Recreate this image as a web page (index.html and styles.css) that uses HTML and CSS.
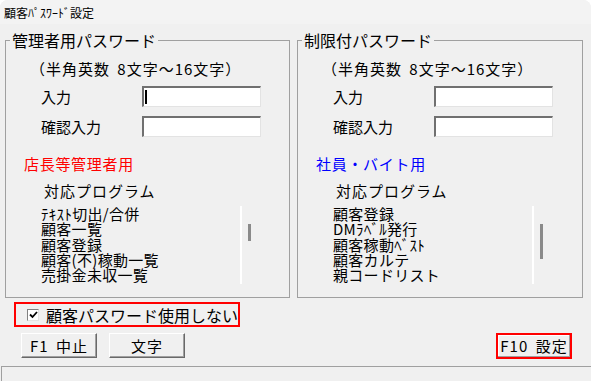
FILE: index.html
```html
<!DOCTYPE html>
<html lang="ja">

<head>
    <meta charset="UTF-8">
    <title>顧客パスワード設定</title>
    <link rel="stylesheet" href="styles.css">
</head>

<body>
    <div class="window">
        <div class="titlebar">顧客ﾊﾟｽﾜｰﾄﾞ設定</div>

        <div class="groups">
            <!-- 管理者用 -->
            <fieldset class="group">
                <legend>管理者用パスワード</legend>
                <p class="hint">（半角英数 8文字～16文字）</p>
                <div class="field">
                    <span class="label">入力</span>
                    <span class="input"><span class="caret"></span></span>
                </div>
                <div class="field">
                    <span class="label">確認入力</span>
                    <span class="input"></span>
                </div>
                <p class="role role-red">店長等管理者用</p>
                <p class="prog">対応プログラム</p>
                <div class="list">
                    <ul class="list-items">
                        <li>ﾃｷｽﾄ切出/合併</li>
                        <li>顧客一覧</li>
                        <li>顧客登録</li>
                        <li>顧客(不)稼動一覧</li>
                        <li>売掛金未収一覧</li>
                    </ul>
                    <div class="track"><span class="thumb thumb-short"></span></div>
                </div>
            </fieldset>

            <!-- 制限付 -->
            <fieldset class="group group-right">
                <legend>制限付パスワード</legend>
                <p class="hint">（半角英数 8文字～16文字）</p>
                <div class="field">
                    <span class="label">入力</span>
                    <span class="input"></span>
                </div>
                <div class="field">
                    <span class="label">確認入力</span>
                    <span class="input"></span>
                </div>
                <p class="role role-blue">社員・バイト用</p>
                <p class="prog">対応プログラム</p>
                <div class="list">
                    <ul class="list-items">
                        <li>顧客登録</li>
                        <li>DMﾗﾍﾞﾙ発行</li>
                        <li>顧客稼動ﾍﾞｽﾄ</li>
                        <li>顧客カルテ</li>
                        <li>親コードリスト</li>
                    </ul>
                    <div class="track"><span class="thumb thumb-long"></span></div>
                </div>
            </fieldset>
        </div>

        <label class="check-row">
            <span class="checkbox">
                <svg width="9" height="8" viewBox="0 0 9 8">
                    <path d="M1 3.5 L3.5 6 L8 1" fill="none" stroke="#000" stroke-width="1.8" />
                </svg>
            </span>
            顧客パスワード使用しない
        </label>

        <div class="buttons">
            <button class="btn">F1 中止</button>
            <button class="btn">文字</button>
            <button class="btn btn-marked">F10 設定</button>
        </div>

        <div class="statusbar"></div>
    </div>
</body>

</html>
```

FILE: styles.css
```css
* {
    margin: 0;
    padding: 0;
    box-sizing: border-box;
}

body {
    background: #fff;
    font-family: "Noto Sans CJK JP", sans-serif;
    color: #000;
}

.window {
    width: 591px;
    height: 381px;
    background: #f0f0f0;
    border-radius: 8px 8px 0 0;
    overflow: hidden;
}

.titlebar {
    height: 24px;
    padding: 5px 0 0 4px;
    font-size: 12px;
    line-height: 16px;
    background: #f3f3f3;
}

.groups {
    display: flex;
    gap: 7px;
    margin-top: 7px;
    padding-left: 5px;
}

.group {
    width: 285px;
    height: 267px;
    border: 1px solid #a0a0a0;
}

.group-right {
    width: 286px;
}

.group legend {
    margin-left: 4px;
    padding: 0 2px;
    font-size: 16px;
    line-height: 18px;
}

.hint {
    margin: 11px 0 0 24px;
    font-size: 15px;
    line-height: 18px;
    letter-spacing: 1px;
    word-spacing: 3px;
}

.field {
    display: flex;
    align-items: center;
    margin: 8px 0 0 35px;
    font-size: 15px;
    line-height: 18px;
}

.field + .field {
    margin-top: 9px;
}

.label {
    width: 101px;
}

.input {
    position: relative;
    width: 119px;
    height: 21px;
    background: #fff;
    border-style: solid;
    border-width: 2px 1px 1px 2px;
    border-color: #707070 #e3e3e3 #e3e3e3 #707070;
}

.caret {
    position: absolute;
    left: 1px;
    top: 2px;
    width: 2px;
    height: 14px;
    background: #000;
}

.role {
    margin: 18px 0 0 18px;
    font-size: 15px;
    line-height: 18px;
    letter-spacing: 0.7px;
}

.role-red {
    color: #f00;
}

.role-blue {
    color: #00f;
}

.prog {
    margin: 9px 0 0 38px;
    font-size: 15px;
    line-height: 18px;
    letter-spacing: 1px;
}

.list {
    display: flex;
    height: 78px;
    margin: 6px 0 0 35px;
}

.list-items {
    width: 199px;
    overflow: hidden;
    list-style: none;
    font-size: 15px;
    line-height: 15.25px;
    letter-spacing: 0.3px;
}

.track {
    width: 12px;
    padding-left: 6px;
    border-left: 2px solid #fff;
}

.thumb {
    display: block;
    width: 3px;
    margin-top: 18px;
    background: #8a8a8a;
}

.thumb-short {
    height: 17px;
}

.thumb-long {
    height: 35px;
}

.check-row {
    display: flex;
    align-items: center;
    gap: 7px;
    width: 226px;
    height: 25px;
    margin: 4px 0 0 14px;
    padding-left: 11px;
    border: 2px solid #f00;
    font-size: 16px;
    line-height: 18px;
}

.checkbox {
    display: flex;
    align-items: center;
    justify-content: center;
    width: 12px;
    height: 12px;
    background: #fff;
    border-style: solid;
    border-width: 1px;
    border-color: #808080 #e3e3e3 #e3e3e3 #808080;
}

.buttons {
    display: flex;
    gap: 12px;
    margin: 6px 19px 0 21px;
}

.btn {
    width: 76px;
    height: 25px;
    background: #f0f0f0;
    border: 1px solid;
    border-color: #fff #696969 #696969 #fff;
    box-shadow: inset -1px -1px #a0a0a0;
    font-family: "Noto Sans CJK JP", sans-serif;
    font-size: 15px;
    line-height: 18px;
    letter-spacing: 1px;
    word-spacing: 3px;
    color: #000;
}

.btn-marked {
    height: 26px;
    margin-left: auto;
    border: 2px solid #f00;
    box-shadow: inset -1px -1px #a0a0a0, inset 1px 1px #fff;
}

.statusbar {
    height: 16px;
    margin: 7px 0 0 1px;
    border-top: 1px solid #a0a0a0;
    border-left: 1px solid #a0a0a0;
}
```
